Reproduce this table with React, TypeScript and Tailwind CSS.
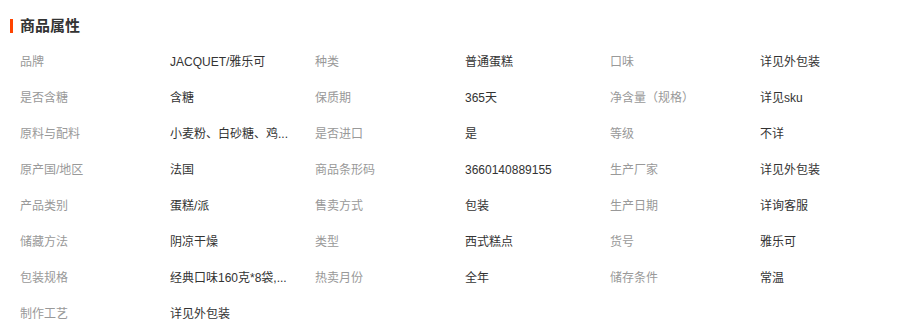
import React from "react";

const rows: [string, string][][] = [
  [["品牌", "JACQUET/雅乐可"], ["种类", "普通蛋糕"], ["口味", "详见外包装"]],
  [["是否含糖", "含糖"], ["保质期", "365天"], ["净含量（规格）", "详见sku"]],
  [["原料与配料", "小麦粉、白砂糖、鸡..."], ["是否进口", "是"], ["等级", "不详"]],
  [["原产国/地区", "法国"], ["商品条形码", "3660140889155"], ["生产厂家", "详见外包装"]],
  [["产品类别", "蛋糕/派"], ["售卖方式", "包装"], ["生产日期", "详询客服"]],
  [["储藏方法", "阴凉干燥"], ["类型", "西式糕点"], ["货号", "雅乐可"]],
  [["包装规格", "经典口味160克*8袋,..."], ["热卖月份", "全年"], ["储存条件", "常温"]],
  [["制作工艺", "详见外包装"]],
];

export default function App() {
  return (
    <div
      className="w-[914px] h-[331px] bg-white overflow-hidden"
      style={{ fontFamily: '"Liberation Sans", "Noto Sans CJK SC", sans-serif' }}
    >
      <div className="flex items-center pt-[17px] pl-[10px] h-[34px]">
        <div className="w-[3px] h-[14px] bg-[#ff4400]" />
        <div className="ml-[7px] text-[15px] font-bold text-[#333333] leading-[16px]">商品属性</div>
      </div>
      <div className="pl-[20px] pt-[10px]">
        {rows.map((row, i) => (
          <div key={i} className="flex h-[36px] items-center text-[12px] leading-[18px]">
            {row.map(([k, v], j) => (
              <div key={j} className="flex w-[295px] shrink-0">
                <div className="w-[150px] shrink-0 text-[#999999] whitespace-nowrap">{k}</div>
                <div className="w-[130px] shrink-0 text-[#333333] whitespace-nowrap">{v}</div>
              </div>
            ))}
          </div>
        ))}
      </div>
    </div>
  );
}
